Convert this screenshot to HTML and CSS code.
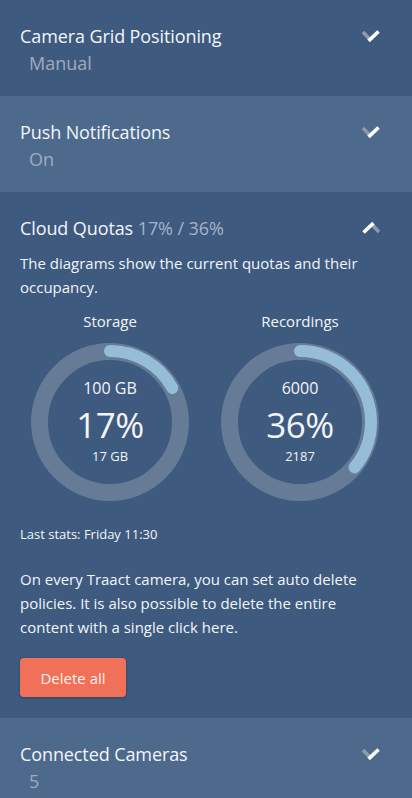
FILE: index.html
```html
<!DOCTYPE html>
<html lang="en">
<head>
<meta charset="utf-8">
<title>Settings</title>
<link rel="stylesheet" href="styles.css">
</head>
<body>
<div class="panel">
  <section class="item dark">
    <div class="row">
      <div class="title">Camera Grid Positioning</div>
      <svg class="chev" viewBox="0 0 20 14" width="20" height="14"><path d="M2 3 L9 10.5" class="dim"/><path d="M7.6 11.9 L17.5 2.5" class="bright"/></svg>
    </div>
    <div class="sub">Manual</div>
  </section>
  <section class="item light">
    <div class="row">
      <div class="title">Push Notifications</div>
      <svg class="chev" viewBox="0 0 20 14" width="20" height="14"><path d="M2 3 L9 10.5" class="dim"/><path d="M7.6 11.9 L17.5 2.5" class="bright"/></svg>
    </div>
    <div class="sub">On</div>
  </section>
  <section class="item dark open">
    <div class="row">
      <div class="title">Cloud Quotas <span class="muted">17% / 36%</span></div>
      <svg class="chev" viewBox="0 0 20 14" width="20" height="14"><path d="M18 11 L11 3.5" class="dim"/><path d="M12.4 2.1 L2.5 11.5" class="bright"/></svg>
    </div>
    <p class="desc">The diagrams show the current quotas and their occupancy.</p>
    <div class="charts">
      <div class="chart">
        <div class="chart-head">Storage</div>
        <div class="ring">
          <svg viewBox="0 0 158 158" width="158" height="158">
            <circle cx="79" cy="79" r="70.5" class="track"/>
            <circle cx="79" cy="79" r="71" class="prog" style="stroke-dasharray: 75.8 500"/>
          </svg>
          <div class="ring-text">
            <div class="r-total">100 GB</div>
            <div class="r-pct">17%</div>
            <div class="r-used">17 GB</div>
          </div>
        </div>
      </div>
      <div class="chart">
        <div class="chart-head">Recordings</div>
        <div class="ring">
          <svg viewBox="0 0 158 158" width="158" height="158">
            <circle cx="79" cy="79" r="70.5" class="track"/>
            <circle cx="79" cy="79" r="71" class="prog" style="stroke-dasharray: 160.6 500"/>
          </svg>
          <div class="ring-text">
            <div class="r-total">6000</div>
            <div class="r-pct">36%</div>
            <div class="r-used">2187</div>
          </div>
        </div>
      </div>
    </div>
    <div class="stats">Last stats: Friday 11:30</div>
    <p class="info">On every Traact camera, you can set auto delete policies. It is also possible to delete the entire content with a single click here.</p>
    <button class="btn">Delete all</button>
  </section>
  <section class="item light">
    <div class="row">
      <div class="title">Connected Cameras</div>
      <svg class="chev" viewBox="0 0 20 14" width="20" height="14"><path d="M2 3 L9 10.5" class="dim"/><path d="M7.6 11.9 L17.5 2.5" class="bright"/></svg>
    </div>
    <div class="sub">5</div>
  </section>
</div>
</body>
</html>
```
FILE: styles.css
```css
* { box-sizing: border-box; }
html, body {
  margin: 0;
  padding: 0;
  background: #3e5a7f;
}
body {
  font-family: "Open Sans", "Noto Sans", sans-serif;
  color: #f2f5f9;
}
.panel {
  width: 412px;
  min-height: 798px;
  display: flex;
  flex-direction: column;
}
.item {
  padding: 24px 20px 21px 20px;
}
.dark { background: #3e5a7f; }
.light { background: #4d6a8c; }
.row {
  display: flex;
  justify-content: space-between;
  align-items: center;
  height: 24px;
}
.title {
  font-size: 18px;
  line-height: 24px;
  letter-spacing: -0.1px;
}
.muted { color: #a5b4c6; }
.chev {
  margin-right: 11px;
}
.chev path {
  fill: none;
  stroke-width: 3.6;
  stroke-linecap: butt;
}
.chev .dim { stroke: #8a9bb0; }
.chev .bright { stroke: #ffffff; }
.sub {
  margin-top: 3px;
  padding-left: 9px;
  font-size: 18px;
  line-height: 24px;
  color: #9eacbe;
}
.desc {
  margin: 11px 0 0 0;
  font-size: 15px;
  line-height: 24px;
}
.charts {
  display: flex;
  justify-content: center;
  gap: 32px;
  margin-top: 10px;
  margin-left: -2px;
}
.chart {
  width: 158px;
  display: flex;
  flex-direction: column;
  align-items: center;
}
.chart-head {
  font-size: 15px;
  line-height: 24px;
  margin-bottom: 10px;
}
.ring {
  display: grid;
  width: 158px;
  height: 158px;
}
.ring > svg, .ring > .ring-text {
  grid-area: 1 / 1;
}
.track {
  fill: none;
  stroke: #657b96;
  stroke-width: 17;
}
.prog {
  fill: none;
  stroke: #95bdd8;
  stroke-width: 12;
  stroke-linecap: round;
  transform: rotate(-90deg);
  transform-origin: 79px 79px;
}
.ring-text {
  display: flex;
  flex-direction: column;
  align-items: center;
  padding-top: 33px;
}
.r-total {
  font-size: 16px;
  line-height: 24px;
}
.r-pct {
  font-size: 35px;
  line-height: 40px;
  margin-top: 5px;
  letter-spacing: -0.5px;
}
.r-used {
  font-size: 13px;
  line-height: 20px;
  margin-top: 1px;
}
.stats {
  margin-top: 23px;
  font-size: 13px;
  line-height: 20px;
}
.info {
  margin: 23px 0 0 0;
  font-size: 15px;
  line-height: 24px;
}
.btn {
  display: block;
  margin-top: 19px;
  width: 106px;
  height: 39px;
  border: none;
  border-radius: 4px;
  background: #f07157;
  color: #fdf2ee;
  font-family: "Open Sans", "Noto Sans", sans-serif;
  font-size: 15px;
  box-shadow: 0 1px 3px rgba(0,0,0,0.25);
  padding: 0;
}
.item:last-child {
  flex: 1;
}
```
